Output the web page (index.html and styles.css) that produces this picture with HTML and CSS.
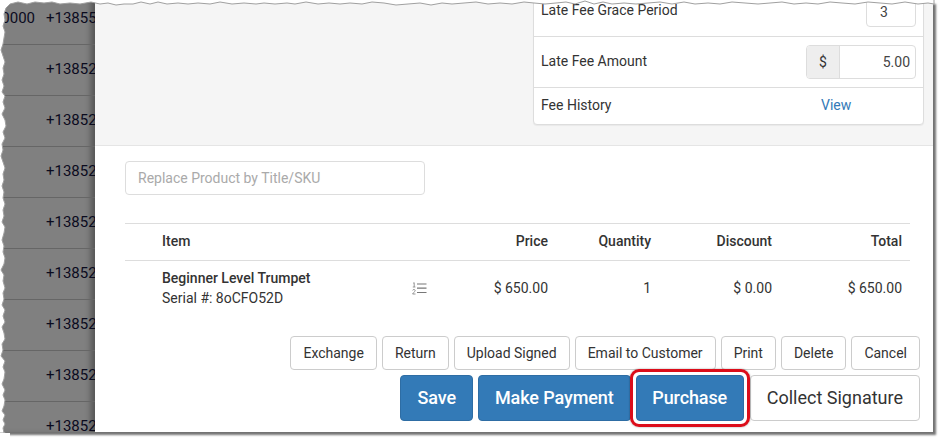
FILE: index.html
```html
<!DOCTYPE html>
<html lang="en">
<head>
<meta charset="utf-8">
<title>Purchase</title>
<link rel="stylesheet" href="styles.css">
</head>
<body>
<div class="frame">
  <div class="backdrop">
    <div class="bg-row bg-first"><span class="bg-a">0000</span><span class="bg-b">+138552</span></div>
    <div class="bg-row"><span class="bg-a"></span><span class="bg-b">+138527</span></div>
    <div class="bg-row"><span class="bg-a"></span><span class="bg-b">+138527</span></div>
    <div class="bg-row"><span class="bg-a"></span><span class="bg-b">+138527</span></div>
    <div class="bg-row"><span class="bg-a"></span><span class="bg-b">+138527</span></div>
    <div class="bg-row"><span class="bg-a"></span><span class="bg-b">+138527</span></div>
    <div class="bg-row"><span class="bg-a"></span><span class="bg-b">+138527</span></div>
    <div class="bg-row"><span class="bg-a"></span><span class="bg-b">+138527</span></div>
    <div class="bg-row"><span class="bg-a"></span><span class="bg-b">+138527</span></div>
  </div>
  <div class="modal">
    <div class="top">
      <div class="card">
        <div class="card-row row-grace">
          <span>Late Fee Grace Period</span>
          <span class="num-input">3</span>
        </div>
        <div class="card-row row-amount">
          <span class="amount-label">Late Fee Amount</span>
          <span class="group"><span class="addon">$</span><span class="group-input">5.00</span></span>
        </div>
        <div class="card-row row-history">
          <span class="history-label">Fee History</span>
          <a class="link" href="#">View</a>
        </div>
      </div>
    </div>
    <div class="body">
      <div class="search">Replace Product by Title/SKU</div>
      <div class="table">
        <div class="tr tr-head">
          <div class="c-item"><span>Item</span></div>
          <div class="c-num">Price</div>
          <div class="c-num">Quantity</div>
          <div class="c-num">Discount</div>
          <div class="c-num">Total</div>
        </div>
        <div class="tr tr-line">
          <div class="c-item">
            <div class="item-text"><strong class="item-name">Beginner Level Trumpet</strong><span>Serial #: 8oCFO52D</span></div>
            <svg class="list-icon" width="16" height="13" viewBox="0 0 16 13" aria-hidden="true">
              <path d="M2.2 1.2 3.2.7V5M1.8 5H4.4" fill="none" stroke="#8a8a8a" stroke-width=".9"/>
              <path d="M1.6 8.4C1.8 7.2 4.2 7.2 4.2 8.6 4.2 9.8 2.2 10.4 1.6 12H4.5" fill="none" stroke="#8a8a8a" stroke-width=".9"/>
              <path d="M6 2H15.5M6 6.2H15.5M6 10.5H15.5" fill="none" stroke="#777" stroke-width="1.2"/>
            </svg>
          </div>
          <div class="c-num">$ 650.00</div>
          <div class="c-num">1</div>
          <div class="c-num">$ 0.00</div>
          <div class="c-num">$ 650.00</div>
        </div>
      </div>
      <div class="actions">
        <button class="btn">Exchange</button>
        <button class="btn">Return</button>
        <button class="btn">Upload Signed</button>
        <button class="btn">Email to Customer</button>
        <button class="btn">Print</button>
        <button class="btn">Delete</button>
        <button class="btn">Cancel</button>
      </div>
      <div class="actions actions-lg">
        <button class="btn-lg primary">Save</button>
        <button class="btn-lg primary">Make Payment</button>
        <button class="btn-lg primary purchase">Purchase</button>
        <button class="btn-lg plain">Collect Signature</button>
      </div>
    </div>
  </div>
</div>
<svg class="tear" width="944" height="444" viewBox="0 0 944 444" aria-hidden="true">
  <path d="M-5 433H4L3 428 5 424 3 420 5 415 2 411 4 406 5 400 3 395 5 390 2 384 4 379 5 372 3 367 5 361 1 356 3 350 2 344 5 339 4 333 2 327 5 322 3 316 5 310 2 305 4 299 3 293 5 288 3 281 4 275 1 270 4 264 5 258 3 252 4 246 2 240 4 233 5 227 2 222 4 216 3 210 5 204 3 198 4 192 2 186 4 180 3 174 5 168 3 162 1 156 3 150 2 144 5 138 3 132 6 126 5 120 2 114 5 108 3 102 5 96 2 92 4 86 2 80 4 74 3 68 5 62 3 56 1 50 3 44 4 38 5 32 3 26 5 20 4 14 6 8 10 4 18 2 27 4 35 2 44 3 52 2 60 4 70 3 80 4 91 2 100 4 108 3 116 5 124 4 133 4 141 2 150 4 158 2 167 4 178 3 188 4 198 3 210 4 220 2 232 4 244 3 256 4 264 3 275 4 287 3 295 4 306 2 318 4 329 3 340 4 350 3 362 4 372 2 384 3 396 5 408 4 420 3 431 5 442 3 452 4 464 3 476 2 488 4 500 3 512 4 524 2 534 3 545 4 556 3 566 2 575 4 585 1 594 4 603 2 612 4 624 3 636 4 648 3 660 2 672 4 684 2 695 4 708 3 720 4 732 2 745 3 758 4 770 3 782 2 794 4 806 3 818 4 830 2 842 3 855 4 868 2 880 3 892 4 905 2 918 4 928 3 934 4V-5H-5Z" fill="#fff" stroke="#a0a0a0" stroke-width="1"/>
  <rect class="tear-corner" x="0" y="433" width="10" height="11"/>
</svg>
</body>
</html>
```

FILE: styles.css
```css
* { box-sizing: border-box; }

html, body {
  margin: 0;
  padding: 0;
  background: #fff;
  height: 100%;
  overflow: hidden;
}

body {
  font-family: Roboto, "Liberation Sans", sans-serif;
  font-size: 14px;
  color: #333;
}

.frame {
  margin: 1px 0 0 1px;
  width: 932px;
  height: 431px;
  display: flex;
  background: #fff;
  box-shadow: 3px 3px 2px rgba(0, 0, 0, .55);
}

.backdrop {
  width: 94px;
  flex: none;
  overflow: hidden;
  background: #808080;
  box-shadow: inset -7px 0 6px -3px rgba(0, 0, 0, .35);
  color: #0b0b1e;
  font-size: 15px;
}

.bg-row {
  height: 51px;
  flex: none;
  display: flex;
  align-items: center;
  padding-bottom: 2px;
  border-bottom: 1px solid #666;
  white-space: nowrap;
}

.bg-first { margin-top: -7px; }

.bg-a {
  width: 34px;
  flex: none;
  text-align: right;
}

.bg-b {
  margin-left: 11px;
  flex: none;
}

.modal {
  flex: 1;
  display: flex;
  flex-direction: column;
  min-width: 0;
}

.top {
  height: 145px;
  flex: none;
  background: #f5f5f5;
  border-bottom: 1px solid #e5e5e5;
  display: flex;
  justify-content: flex-end;
  align-items: flex-end;
  padding: 0 9px 20px 0;
  overflow: hidden;
}

.card {
  width: 391px;
  flex: none;
  background: #fff;
  border: 1px solid #ddd;
  border-radius: 4px;
  box-shadow: 0 1px 1px rgba(0, 0, 0, .05);
}

.card-row {
  display: flex;
  align-items: center;
  justify-content: space-between;
  padding: 0 7px;
  border-bottom: 1px solid #ddd;
}

.row-grace {
  height: 60px;
  align-items: flex-start;
  padding-top: 16px;
}

.row-grace > span:first-child { padding-top: 9px; }

.num-input {
  width: 50px;
  height: 34px;
  padding: 10px 0 0 13px;
  border: 1px solid #ddd;
  border-radius: 4px;
  background: #fff;
  color: #444;
}

.row-amount { height: 51px; }

.amount-label { padding-bottom: 2px; }

.row-history {
  height: 36px;
  border-bottom: 0;
  justify-content: flex-start;
  padding-bottom: 2px;
}

.history-label { width: 280px; }

.group {
  display: flex;
  width: 110px;
  height: 34px;
  border: 1px solid #ddd;
  border-radius: 4px;
  overflow: hidden;
  line-height: 32px;
}

.addon {
  width: 33px;
  flex: none;
  background: #eee;
  border-right: 1px solid #ddd;
  text-align: center;
}

.group-input {
  flex: 1;
  padding-right: 5px;
  text-align: right;
  color: #444;
}

.link {
  color: #337ab7;
  text-decoration: none;
}

.body {
  flex: 1;
  padding: 15px 0 0 30px;
  min-height: 0;
}

.search {
  width: 300px;
  height: 34px;
  padding: 0 12px;
  border: 1px solid #ddd;
  border-radius: 4px;
  color: #aaa;
  line-height: 32px;
}

.table {
  width: 785px;
  margin-top: 28px;
  border-top: 1px solid #ddd;
  font-size: 14px;
}

.tr {
  display: grid;
  grid-template-columns: 315px 116px 103px 121px 130px;
}

.tr-head {
  height: 37px;
  align-items: center;
  padding-bottom: 2px;
  border-bottom: 1px solid #ddd;
  font-weight: 500;
}

.tr-line {
  height: 75px;
  padding-top: 7px;
}

.c-item {
  display: flex;
  justify-content: space-between;
  align-items: center;
  padding: 0 13px 0 37px;
  height: 40px;
}

.tr-head .c-item { height: auto; }

.c-num {
  padding-right: 8px;
  text-align: right;
}

.tr-line .c-num { padding-top: 12px; }

.item-text {
  display: flex;
  flex-direction: column;
  gap: 4px;
  line-height: 16px;
}

.item-name { font-weight: 500; color: #333; }

.list-icon {
  flex: none;
  margin-top: 0;
}

.actions {
  width: 795px;
  display: flex;
  justify-content: flex-end;
  gap: 5px;
}

.actions-lg {
  margin-top: 5px;
  font-size: 18px;
}

.btn, .btn-lg {
  font-family: inherit;
  border: 1px solid #ccc;
  border-radius: 4px;
  background: #fff;
  color: #333;
  white-space: nowrap;
}

.btn {
  height: 34px;
  padding: 0 12px;
  font-size: 14px;
}

.btn-lg {
  height: 46px;
  padding: 0 16px 1px;
  font-size: 18px;
}

.plain { margin-left: 1px; }

.primary {
  letter-spacing: -.1px;
  background: #337ab7;
  border-color: #2e6da4;
  color: #fff;
  font-weight: 500;
}

.purchase {
  position: relative;
  padding: 0 15.6px 1px;
}

.purchase::after {
  content: "";
  position: absolute;
  top: -7px;
  right: -7px;
  bottom: -7px;
  left: -7px;
  border: 3px solid #dc0d1a;
  border-radius: 9px;
  box-shadow: 0 0 2px rgba(0, 0, 0, .4);
}

.tear {
  position: absolute;
  top: 0;
  left: 0;
  pointer-events: none;
}

.tear-corner { fill: #fff; }
```
